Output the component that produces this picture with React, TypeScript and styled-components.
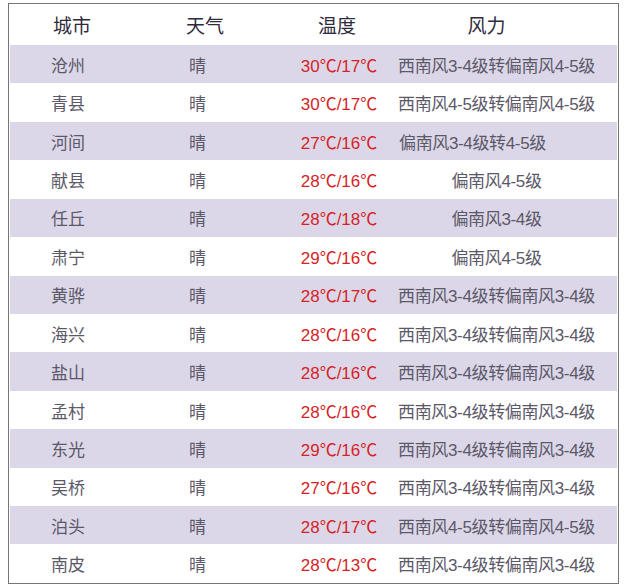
import React from 'react';
import styled, { createGlobalStyle } from 'styled-components';

const GlobalStyle = createGlobalStyle`
  body {
    margin: 0;
    background: #ffffff;
    font-family: 'Liberation Sans', 'Noto Sans CJK SC', sans-serif;
  }
`;

const StyledTable = styled.section`
  margin: 3px 7px 0 8px;
  width: 611px;
  box-sizing: border-box;
  border: 1px solid #757575;
  padding: 0 1px;
  background: #fff;
`;

const Row = styled.div<{ $head?: boolean; $shaded?: boolean }>`
  display: grid;
  grid-template-columns: 139px 140px 100px 1fr;
  padding-right: 13px;
  align-items: center;
  height: ${(p) => (p.$head ? '41px' : '38.43px')};
  background: ${(p) => (p.$shaded ? '#dcd7e8' : '#ffffff')};
  color: ${(p) => (p.$head ? '#2f2a3a' : '#5b5868')};
  font-size: ${(p) => (p.$head ? '19px' : '17px')};
`;

const Cell = styled.div<{ $align?: 'left' | 'center'; $pad?: number; $padR?: number; $red?: boolean }>`
  text-align: ${(p) => p.$align || 'left'};
  padding-left: ${(p) => p.$pad || 0}px;
  padding-right: ${(p) => p.$padR || 0}px;
  color: ${(p) => (p.$red ? '#d61f26' : 'inherit')};
  white-space: nowrap;
`;

const Wind = styled(Cell)`
  letter-spacing: -0.35px;
`;

const rows: [string, string, string, boolean?][] = [
  ['沧州', '30℃/17℃', '西南风3-4级转偏南风4-5级'],
  ['青县', '30℃/17℃', '西南风4-5级转偏南风4-5级'],
  ['河间', '27℃/16℃', '偏南风3-4级转4-5级', true],
  ['献县', '28℃/16℃', '偏南风4-5级'],
  ['任丘', '28℃/18℃', '偏南风3-4级'],
  ['肃宁', '29℃/16℃', '偏南风4-5级'],
  ['黄骅', '28℃/17℃', '西南风3-4级转偏南风3-4级'],
  ['海兴', '28℃/16℃', '西南风3-4级转偏南风3-4级'],
  ['盐山', '28℃/16℃', '西南风3-4级转偏南风3-4级'],
  ['孟村', '28℃/16℃', '西南风3-4级转偏南风3-4级'],
  ['东光', '29℃/16℃', '西南风3-4级转偏南风3-4级'],
  ['吴桥', '27℃/16℃', '西南风3-4级转偏南风3-4级'],
  ['泊头', '28℃/17℃', '西南风4-5级转偏南风4-5级'],
  ['南皮', '28℃/13℃', '西南风3-4级转偏南风3-4级'],
];

const App = () => {
  return (
    <>
      <GlobalStyle />
      <StyledTable>
        <Row $head>
          <Cell $pad={43}>城市</Cell>
          <Cell $pad={37}>天气</Cell>
          <Cell $align='center' $padR={4}>温度</Cell>
          <Cell $align='center' $padR={20}>风力</Cell>
        </Row>
        {rows.map(([city, temp, wind, leftWind], i) => (
          <Row key={city} $shaded={i % 2 === 0}>
            <Cell $pad={41}>{city}</Cell>
            <Cell $pad={40}>晴</Cell>
            <Cell $align='center' $red>
              {temp}
            </Cell>
            {leftWind ? (
              <Wind $pad={10}>{wind}</Wind>
            ) : (
              <Wind $align='center'>{wind}</Wind>
            )}
          </Row>
        ))}
      </StyledTable>
    </>
  );
};

export default App;
